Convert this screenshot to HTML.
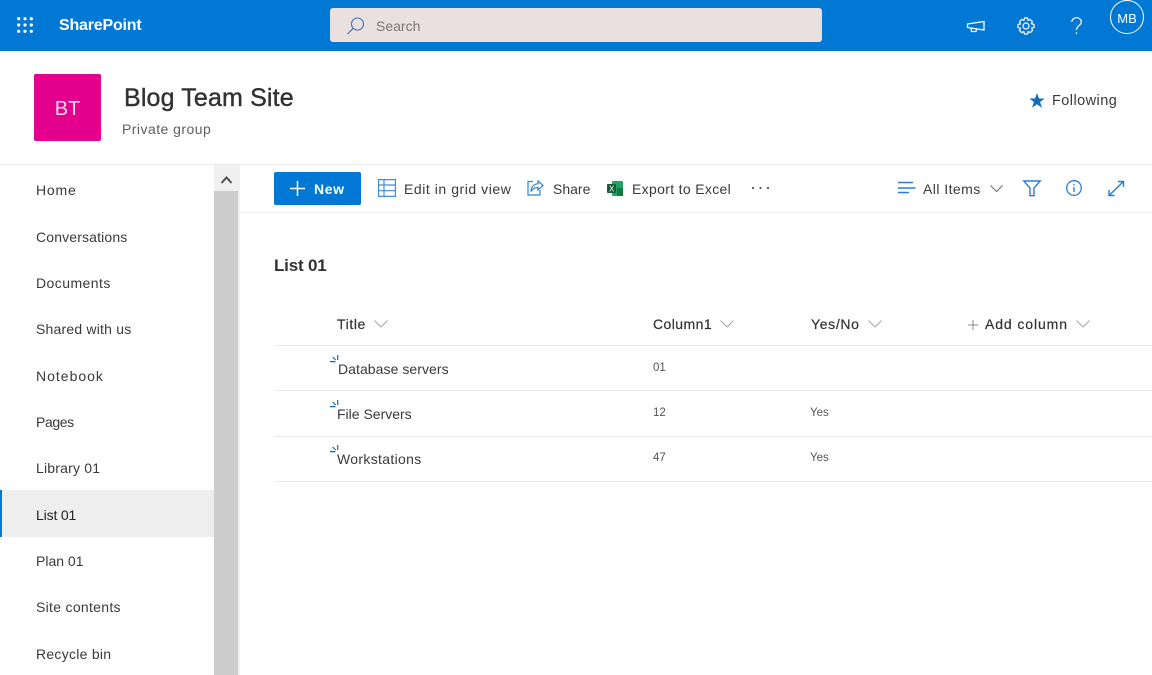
<!DOCTYPE html>
<html><head><meta charset="utf-8"><style>
html,body{margin:0;padding:0;background:#fff}
body{width:1152px;height:675px;overflow:hidden;position:relative;font-family:"Liberation Sans",sans-serif;color:#323130}
.t{position:absolute;white-space:nowrap;font-size:14px;line-height:18px;color:#3b3a39}
.b{position:absolute}
svg{position:absolute;overflow:visible}
.nav{left:36px}
.d{font-size:11.5px;color:#555}
</style></head><body>
<div class="b" style="left:0;top:0;width:1152px;height:51px;background:#0078d4"></div>
<svg style="left:17px;top:17px" width="17" height="17" fill="#fff"><circle cx="1.7" cy="1.7" r="1.6"/><circle cx="8" cy="1.7" r="1.6"/><circle cx="14.3" cy="1.7" r="1.6"/><circle cx="1.7" cy="8" r="1.6"/><circle cx="8" cy="8" r="1.6"/><circle cx="14.3" cy="8" r="1.6"/><circle cx="1.7" cy="14.3" r="1.6"/><circle cx="8" cy="14.3" r="1.6"/><circle cx="14.3" cy="14.3" r="1.6"/></svg>
<div class="t" style="left:59px;top:17px;font-size:16px;font-weight:700;color:#fff;letter-spacing:-.2px">SharePoint</div>
<div class="b" style="left:330px;top:8px;width:492px;height:34px;background:#eae0e0;border-radius:3px"></div>
<svg style="left:347px;top:17px" width="18" height="18" fill="none" stroke="#3f73ad" stroke-width="1.1"><circle cx="10.5" cy="7" r="6"/><path d="M6.3 11.2L.5 17"/></svg>
<div class="t" style="left:376px;top:17px;color:#7a7574">Search</div>
<svg style="left:966px;top:19px" width="20" height="15" fill="none" stroke="#fff" stroke-width="1.3"><path d="M1.5 5L18 2.5V11L1.5 8.5ZM5 9.5L5.5 12.5H10L10.5 10"/></svg>
<svg style="left:1017px;top:17px" width="18" height="18" fill="none" stroke="#fff" stroke-width="1.2"><circle cx="9" cy="9" r="3"/><path d="M7.5 1H10.5L11 3.3L13 2.4L15.4 4.6L14.4 6.7L17 7.5V10.5L14.6 11.2L15.5 13.4L13.3 15.6L11.2 14.6L10.5 17H7.5L6.8 14.6L4.7 15.6L2.4 13.4L3.5 11.2L1 10.5V7.5L3.5 6.8L2.5 4.6L4.7 2.4L6.8 3.4Z"/></svg>
<svg style="left:1071px;top:17px" width="11" height="17" fill="none" stroke="#fff" stroke-width="1.2"><path d="M.8 5C.8 2.4 3 .7 5.5 .7C8.2 .7 10.3 2.5 10.3 5C10.3 8.5 5.5 8.8 5.5 13M5.5 15.2V17"/></svg>
<div class="b" style="left:1110px;top:0;width:32px;height:32px;border:1px solid #fff;border-radius:50%;color:#fff;font-size:13px;line-height:35px;text-align:center">MB</div>

<div class="b" style="left:34px;top:74px;width:67px;height:67px;background:#e3008c;border-radius:2px;color:#ffd9f2;font-size:20px;line-height:71px;text-align:center">BT</div>
<div class="t" style="left:124px;top:83px;font-size:25px;line-height:30px;color:#323130;font-weight:400;letter-spacing:.15px;-webkit-text-stroke:.4px #323130">Blog Team Site</div>
<div class="t" style="left:122px;top:120px;color:#605e5c;letter-spacing:.46px">Private group</div>
<svg style="left:1029px;top:93px" width="16" height="15" fill="#106ebe"><path d="M8 0L10 5.5H15.7L11.1 9L12.9 14.8L8 11.3L3.1 14.8L4.9 9L.3 5.5H6Z"/></svg>
<div class="t" style="left:1052px;top:92px;font-size:14.5px;letter-spacing:.44px">Following</div>

<div class="b" style="left:0;top:164px;width:1152px;height:1px;background:#edebe9"></div>
<div class="b" style="left:214px;top:165px;width:24px;height:510px;background:#cdcdcd"></div>
<div class="b" style="left:214px;top:165px;width:24px;height:26px;background:#f0f0f0"></div>
<div class="b" style="left:238px;top:165px;width:2px;height:510px;background:#f0f0f0"></div>
<svg style="left:220px;top:175px" width="13" height="9" fill="none" stroke="#505050" stroke-width="2"><path d="M1.5 8L6.5 2.5L11.5 8"/></svg>

<div class="t nav" style="top:181px;letter-spacing:.8px">Home</div>
<div class="t nav" style="top:228px;letter-spacing:.15px">Conversations</div>
<div class="t nav" style="top:274px;letter-spacing:.44px">Documents</div>
<div class="t nav" style="top:320px;letter-spacing:.2px">Shared with us</div>
<div class="t nav" style="top:367px;letter-spacing:1px">Notebook</div>
<div class="t nav" style="top:413px;letter-spacing:-.4px">Pages</div>
<div class="t nav" style="top:459px;letter-spacing:.2px">Library 01</div>
<div class="b" style="left:0;top:490px;width:214px;height:47px;background:#eeeeee"></div>
<div class="b" style="left:0;top:490px;width:2px;height:47px;background:#0078d4"></div>
<div class="t nav" style="top:506px;color:#252423;letter-spacing:-.15px">List 01</div>
<div class="t nav" style="top:552px">Plan 01</div>
<div class="t nav" style="top:598px;letter-spacing:.3px">Site contents</div>
<div class="t nav" style="top:645px;letter-spacing:.27px">Recycle bin</div>

<div class="b" style="left:240px;top:212px;width:912px;height:1px;background:#f0efee"></div>
<div class="b" style="left:274px;top:172px;width:87px;height:33px;background:#0078d4;border-radius:2px"></div>
<svg style="left:290px;top:181px" width="15" height="15" stroke="#fff" stroke-width="1.5"><path d="M7.5 0V15M0 7.5H15"/></svg>
<div class="t" style="left:314px;top:180px;color:#fff;font-weight:700;font-size:14px;letter-spacing:.6px">New</div>
<svg style="left:378px;top:179px" width="18" height="18" fill="none" stroke="#3f8fd6" stroke-width="1.2"><path d="M.6.6H17.4V17.4H.6ZM.6 6H17.4M.6 11.7H17.4M6 .6V17.4"/></svg>
<div class="t" style="left:404px;top:180px;letter-spacing:.55px">Edit in grid view</div>
<svg style="left:527px;top:180px" width="17" height="16" fill="none" stroke="#2f86d2" stroke-width="1.2"><path d="M6 1.5H1V15H13V10"/><path d="M11 1L16 5.5L11 10V7.5C8 7.5 5.5 8.5 4 11.5C4 7 7 4 11 3.7Z"/></svg>
<div class="t" style="left:553px;top:180px">Share</div>
<svg style="left:607px;top:181px" width="16" height="15"><rect x="5" y="0" width="11" height="15" rx="1" fill="#21a366"/><rect x="10" y="7" width="6" height="8" fill="#107c41"/><rect x="0" y="3" width="9" height="9" rx="1" fill="#185c37"/><text x="2" y="10.5" font-size="8" fill="#fff" font-family="Liberation Sans">X</text></svg>
<div class="t" style="left:632px;top:180px;letter-spacing:.33px">Export to Excel</div>
<svg style="left:752px;top:187px" width="18" height="3" fill="#555"><circle cx="1" cy="1" r="1.1"/><circle cx="8.5" cy="1" r="1.1"/><circle cx="16" cy="1" r="1.1"/></svg>
<svg style="left:898px;top:181px" width="18" height="13" stroke="#2b7cd3" stroke-width="1.4"><path d="M0 1.5H15M0 7H17.5M0 11.5H11"/></svg>
<div class="t" style="left:923px;top:180px;letter-spacing:.45px">All Items</div>
<svg style="left:990px;top:185px" width="13" height="8" fill="none" stroke="#707070" stroke-width="1.1"><path d="M.5 .5L6.5 6.5L12.5 .5"/></svg>
<svg style="left:1023px;top:180px" width="18" height="17" fill="none" stroke="#2b7cd3" stroke-width="1.4"><path d="M.8 1H17.2L11 8V15.7H7V8Z"/></svg>
<svg style="left:1066px;top:180px" width="16" height="16" fill="none" stroke="#2b7cd3" stroke-width="1.3"><circle cx="8" cy="8" r="7.3"/><path d="M8 7V12M8 4V5.4"/></svg>
<svg style="left:1108px;top:181px" width="16" height="15" fill="none" stroke="#1f7fd0" stroke-width="1.4"><path d="M1 14.5L15.5 .5M10 .5H15.5V6M1 9V14.5H6.5"/></svg>

<div class="t" style="left:274px;top:256px;font-size:17px;line-height:20px;font-weight:700;color:#323130;letter-spacing:-.2px">List 01</div>

<div class="t" style="left:337px;top:315px;color:#323130;letter-spacing:.6px;-webkit-text-stroke:.2px #323130">Title</div>
<svg style="left:374px;top:320px" width="14" height="8" fill="none" stroke="#a8a6a4" stroke-width="1"><path d="M.5 .5L7 7L13.5 .5"/></svg>
<div class="t" style="left:653px;top:315px;color:#323130;letter-spacing:.43px;-webkit-text-stroke:.2px #323130">Column1</div>
<svg style="left:720px;top:320px" width="14" height="8" fill="none" stroke="#a8a6a4" stroke-width="1"><path d="M.5 .5L7 7L13.5 .5"/></svg>
<div class="t" style="left:811px;top:315px;color:#323130;letter-spacing:.66px;-webkit-text-stroke:.2px #323130">Yes/No</div>
<svg style="left:868px;top:320px" width="14" height="8" fill="none" stroke="#a8a6a4" stroke-width="1"><path d="M.5 .5L7 7L13.5 .5"/></svg>
<svg style="left:968px;top:320px" width="10" height="10" stroke="#8a8886" stroke-width="1"><path d="M5 0V10M0 5H10"/></svg>
<div class="t" style="left:985px;top:315px;color:#323130;letter-spacing:.9px;-webkit-text-stroke:.2px #323130">Add column</div>
<svg style="left:1076px;top:320px" width="14" height="8" fill="none" stroke="#a8a6a4" stroke-width="1"><path d="M.5 .5L7 7L13.5 .5"/></svg>

<div class="b" style="left:274px;top:345px;width:878px;height:1px;background:#edebe9"></div>
<div class="b" style="left:274px;top:390px;width:878px;height:1px;background:#edebe9"></div>
<div class="b" style="left:274px;top:436px;width:878px;height:1px;background:#edebe9"></div>
<div class="b" style="left:274px;top:481px;width:878px;height:1px;background:#edebe9"></div>

<svg style="left:330px;top:355px" width="9" height="8" fill="none" stroke="#0f6cbd" stroke-width="1.2"><path d="M0 6.6H5.5M2.7 2L5.7 5M7.7 0V5"/></svg>
<svg style="left:330px;top:400px" width="9" height="8" fill="none" stroke="#0f6cbd" stroke-width="1.2"><path d="M0 6.6H5.5M2.7 2L5.7 5M7.7 0V5"/></svg>
<svg style="left:330px;top:445px" width="9" height="8" fill="none" stroke="#0f6cbd" stroke-width="1.2"><path d="M0 6.6H5.5M2.7 2L5.7 5M7.7 0V5"/></svg>

<div class="t" style="left:338px;top:360px;letter-spacing:.06px">Database servers</div>
<div class="t" style="left:337px;top:405px">File Servers</div>
<div class="t" style="left:337px;top:450px;letter-spacing:.33px">Workstations</div>
<div class="t d" style="left:653px;top:359px">01</div>
<div class="t d" style="left:653px;top:404px">12</div>
<div class="t d" style="left:653px;top:449px">47</div>
<div class="t d" style="left:810px;top:404px">Yes</div>
<div class="t d" style="left:810px;top:449px">Yes</div>
</body></html>
